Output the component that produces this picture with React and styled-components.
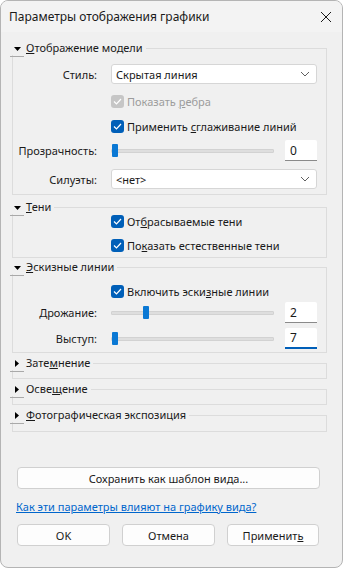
import React from "react";
import styled, { createGlobalStyle } from "styled-components";

const GlobalStyle = createGlobalStyle`
    html, body {
        margin: 0;
        padding: 0;
        background: #ffffff;
    }
    * {
        box-sizing: border-box;
    }
`;

const Window = styled.div`
    width: 343px;
    height: 568px;
    border: 1px solid #b4b4b4;
    border-radius: 8px;
    background: #f0f0f0;
    display: flex;
    flex-direction: column;
    overflow: hidden;
    font-family: "Noto Sans", "Open Sans", sans-serif;
    font-size: 11px;
    color: #1a1a1a;
`;

const TitleBar = styled.div`
    height: 31px;
    flex: none;
    background: #f3f3f3;
    display: flex;
    align-items: center;
    justify-content: space-between;
    padding: 0 9px 0 8px;
    font-size: 12px;
`;

const CloseButton = styled.button`
    border: none;
    background: none;
    padding: 0;
    width: 14px;
    height: 14px;
    display: flex;
    align-items: center;
    justify-content: center;
`;

const Sections = styled.div`
    padding: 0 15px 0 11px;
    margin-top: 9px;
`;

const Group = styled.fieldset`
    margin: ${p => p.$mt || 0}px 0 0 0;
    padding: 0 9px ${p => p.$pb || 0}px 0;
    border: 1px solid #dcdcdc;
    min-inline-size: 0;
    display: flex;
    flex-direction: column;
    min-height: ${p => p.$minh || 0}px;
`;

const Legend = styled.legend`
    padding: 0 3px 0 0;
    margin-left: -3px;
    height: 14px;
    line-height: 14px;
    display: flex;
    align-items: center;
    background: #f0f0f0;
    white-space: nowrap;
`;

const Toggle = styled.span`
    width: 14px;
    height: 16px;
    margin-top: 2px;
    border-bottom: 1px solid #a9a9a9;
    display: flex;
    align-items: center;
    justify-content: center;
    margin-right: 2px;
`;

const Row = styled.div`
    display: grid;
    grid-template-columns: 98px 1fr;
    align-items: center;
    margin-top: ${p => p.$mt || 0}px;
    height: ${p => p.$h}px;
`;

const SliderRow = styled(Row)`
    grid-template-columns: 98px 1fr 43px;
`;

const Label = styled.span`
    text-align: right;
    white-space: nowrap;
    padding-right: 14px;
`;

const Select = styled.div`
    height: 20px;
    background: #ffffff;
    border: 1px solid #d6d6d6;
    border-radius: 3px;
    display: flex;
    align-items: center;
    justify-content: space-between;
    padding: 0 6px 0 4px;
`;

const Check = styled.span`
    width: 13px;
    height: 13px;
    border-radius: 3px;
    background: ${p => (p.$disabled ? "#c6c6c6" : "#005fb8")};
    display: inline-flex;
    align-items: center;
    justify-content: center;
    flex: none;
`;

const CheckLabel = styled.label`
    display: flex;
    align-items: center;
    gap: 3px;
    color: ${p => (p.$disabled ? "#9c9c9c" : "#1a1a1a")};
    white-space: nowrap;
`;

const Track = styled.div`
    height: 4px;
    background: #dedede;
    border: 1px solid #d2d2d2;
    border-radius: 1px;
    display: flex;
    align-items: center;
`;

const Thumb = styled.span`
    width: 6px;
    height: 13px;
    background: #0a78d4;
    border-radius: 1px;
    flex: none;
`;

const NumberBox = styled.div`
    height: 21px;
    margin-left: 11px;
    background: #ffffff;
    border-bottom: ${p => (p.$focused ? "2px solid #005fb8" : "1px solid #8a8a8a")};
    border-radius: 2px 2px 0 0;
    display: flex;
    align-items: center;
    padding: 0 5px;
    font-size: 12px;
`;

const Footer = styled.div`
    margin-top: auto;
    padding: 0 22px 21px 16px;
    display: flex;
    flex-direction: column;
`;

const Button = styled.button`
    height: 22px;
    background: #fdfdfd;
    border: 1px solid #d0d0d0;
    border-radius: 4px;
    font-family: inherit;
    font-size: 11px;
    color: #1a1a1a;
    padding: 0;
`;

const HelpLink = styled.a`
    margin: 10px 0 0 -1px;
    line-height: 16px;
    color: #0066cc;
    text-decoration: underline;
`;

const ButtonRow = styled.div`
    display: grid;
    grid-template-columns: 93px 93px 92px;
    column-gap: 12px;
    margin-top: 9px;
`;

const Chevron = () => (
    <svg width="10" height="6" viewBox="0 0 10 6">
        <path d="M1 1 L5 5 L9 1" fill="none" stroke="#606060" strokeWidth="1" />
    </svg>
);

const Tick = () => (
    <svg width="9" height="7" viewBox="0 0 9 7">
        <path d="M1 3.5 L3.5 6 L8 1" fill="none" stroke="#ffffff" strokeWidth="1.2" />
    </svg>
);

const Arrow = ({ open }) =>
    open ? (
        <svg width="7" height="4" viewBox="0 0 7 4">
            <path d="M0 0 L7 0 L3.5 4 Z" fill="#000" />
        </svg>
    ) : (
        <svg width="4" height="7" viewBox="0 0 4 7">
            <path d="M0 0 L4 3.5 L0 7 Z" fill="#000" />
        </svg>
    );

const Head = ({ open, children }) => (
    <Legend>
        <Toggle>
            <Arrow open={open} />
        </Toggle>
        <span>{children}</span>
    </Legend>
);

const CheckItem = ({ disabled, children }) => (
    <CheckLabel $disabled={disabled}>
        <Check $disabled={disabled}>
            <Tick />
        </Check>
        <span>{children}</span>
    </CheckLabel>
);

const Slider = ({ pos }) => (
    <Track>
        <Thumb style={{ marginLeft: pos }} />
    </Track>
);

const App = () => {
    return (
        <>
            <GlobalStyle />
            <Window>
                <TitleBar>
                    <span>Параметры отображения графики</span>
                    <CloseButton>
                        <svg width="12" height="12" viewBox="0 0 12 12">
                            <path d="M1 1 L11 11 M11 1 L1 11" stroke="#1a1a1a" strokeWidth="1" />
                        </svg>
                    </CloseButton>
                </TitleBar>

                <Sections>
                    <Group $pb={5}>
                        <Head open><u>О</u>тображение модели</Head>
                        <Row $mt={9} $h={20}>
                            <Label>Стиль:</Label>
                            <Select>
                                Скрытая линия
                                <Chevron />
                            </Select>
                        </Row>
                        <Row $mt={10} $h={14}>
                            <span />
                            <CheckItem disabled>Показать <u>р</u>ебра</CheckItem>
                        </Row>
                        <Row $mt={11} $h={14}>
                            <span />
                            <CheckItem>Применить <u>с</u>глаживание линий</CheckItem>
                        </Row>
                        <SliderRow $mt={7} $h={21}>
                            <Label>Прозрачность:</Label>
                            <Slider pos={0} />
                            <NumberBox>0</NumberBox>
                        </SliderRow>
                        <Row $mt={8} $h={20}>
                            <Label>Силуэты:</Label>
                            <Select>
                                {"<нет>"}
                                <Chevron />
                            </Select>
                        </Row>
                    </Group>

                    <Group $mt={5} $pb={5}>
                        <Head open><u>Т</u>ени</Head>
                        <Row $mt={0} $h={14}>
                            <span />
                            <CheckItem>От<u>б</u>расываемые тени</CheckItem>
                        </Row>
                        <Row $mt={10} $h={14}>
                            <span />
                            <CheckItem>По<u>к</u>азать естественные тени</CheckItem>
                        </Row>
                    </Group>

                    <Group $mt={2} $pb={3}>
                        <Head open><u>Э</u>скизные линии</Head>
                        <Row $mt={10} $h={14}>
                            <span />
                            <CheckItem>Включить эски<u>з</u>ные линии</CheckItem>
                        </Row>
                        <SliderRow $mt={4} $h={21}>
                            <Label>Дрожание:</Label>
                            <Slider pos={31} />
                            <NumberBox>2</NumberBox>
                        </SliderRow>
                        <SliderRow $mt={5} $h={21}>
                            <Label>Выступ:</Label>
                            <Slider pos={0} />
                            <NumberBox $focused>7</NumberBox>
                        </SliderRow>
                    </Group>

                    <Group $mt={3} $minh={23}>
                        <Head>Зате<u>м</u>нение</Head>
                    </Group>
                    <Group $mt={3} $minh={23}>
                        <Head>Осве<u>щ</u>ение</Head>
                    </Group>
                    <Group $mt={3} $minh={24}>
                        <Head><u>Ф</u>отографическая экспозиция</Head>
                    </Group>
                </Sections>

                <Footer>
                    <Button>Сохранить как шаблон вида...</Button>
                    <HelpLink href="#">Как эти параметры влияют на графику вида?</HelpLink>
                    <ButtonRow>
                        <Button>OK</Button>
                        <Button>Отмена</Button>
                        <Button>Применит<u>ь</u></Button>
                    </ButtonRow>
                </Footer>
            </Window>
        </>
    );
};

export default App;
